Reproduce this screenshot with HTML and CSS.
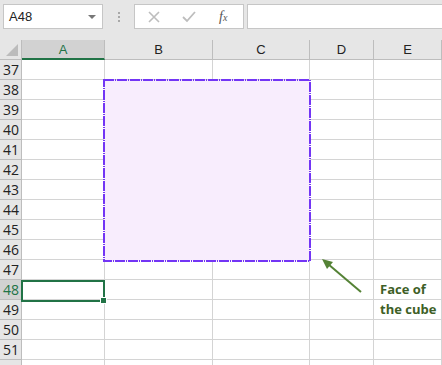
FILE: index.html
```html
<!DOCTYPE html>
<html>
<head>
<meta charset="utf-8">
<link rel="stylesheet" href="styles.css">
</head>
<body>
<div class="app">
  <div class="toolbar">
    <div class="namebox">
      <span class="name">A48</span>
      <span class="caret"></span>
    </div>
    <div class="dots"><i></i><i></i><i></i></div>
    <div class="fbtns">
      <svg class="ic" width="14" height="14" viewBox="0 0 14 14"><path d="M2 2 L12 12 M12 2 L2 12" stroke="#bdbdbd" stroke-width="1.6" fill="none"/></svg>
      <svg class="ic" width="16" height="14" viewBox="0 0 16 14"><path d="M2 7 L6 11 L14 2" stroke="#bdbdbd" stroke-width="1.8" fill="none"/></svg>
      <span class="fx">f<sub>x</sub></span>
    </div>
    <div class="finput"></div>
  </div>
  <div class="sheet">
    <div class="grid">
      <div class="corner"><span class="tri"></span></div>
      <div class="ch sel">A</div>
      <div class="ch">B</div>
      <div class="ch">C</div>
      <div class="ch">D</div>
      <div class="ch">E</div>

      <div class="rh">37</div><div class="c"></div><div class="c"></div><div class="c"></div><div class="c"></div><div class="c"></div>
      <div class="rh">38</div><div class="c"></div><div class="c"></div><div class="c"></div><div class="c"></div><div class="c"></div>
      <div class="rh">39</div><div class="c"></div><div class="c"></div><div class="c"></div><div class="c"></div><div class="c"></div>
      <div class="rh">40</div><div class="c"></div><div class="c"></div><div class="c"></div><div class="c"></div><div class="c"></div>
      <div class="rh">41</div><div class="c"></div><div class="c"></div><div class="c"></div><div class="c"></div><div class="c"></div>
      <div class="rh">42</div><div class="c"></div><div class="c"></div><div class="c"></div><div class="c"></div><div class="c"></div>
      <div class="rh">43</div><div class="c"></div><div class="c"></div><div class="c"></div><div class="c"></div><div class="c"></div>
      <div class="rh">44</div><div class="c"></div><div class="c"></div><div class="c"></div><div class="c"></div><div class="c"></div>
      <div class="rh">45</div><div class="c"></div><div class="c"></div><div class="c"></div><div class="c"></div><div class="c"></div>
      <div class="rh">46</div><div class="c"></div><div class="c"></div><div class="c"></div><div class="c"></div><div class="c"></div>
      <div class="rh">47</div><div class="c"></div><div class="c"></div><div class="c"></div><div class="c"></div><div class="c"></div>
      <div class="rh rsel">48</div><div class="c"></div><div class="c"></div><div class="c"></div><div class="c"></div><div class="c note">Face of</div>
      <div class="rh">49</div><div class="c"></div><div class="c"></div><div class="c"></div><div class="c"></div><div class="c note">the cube</div>
      <div class="rh">50</div><div class="c"></div><div class="c"></div><div class="c"></div><div class="c"></div><div class="c"></div>
      <div class="rh">51</div><div class="c"></div><div class="c"></div><div class="c"></div><div class="c"></div><div class="c"></div>
      <div class="rh"></div><div class="c"></div><div class="c"></div><div class="c"></div><div class="c"></div><div class="c"></div>
    </div>
    <div class="selbox"><span class="handle"></span></div>
    <svg class="overlay" width="442" height="325" viewBox="0 0 442 325">
      <rect x="104" y="40" width="206" height="181" fill="#f8edfd" stroke="#7335f5" stroke-width="2" stroke-dasharray="10 1 1 1"/>
      <line x1="361" y1="252" x2="328" y2="224" stroke="#548235" stroke-width="2"/>
      <polygon points="322,219 333,222 327,229" fill="#548235"/>
    </svg>
  </div>
</div>
</body>
</html>
```

FILE: styles.css
```css
html, body {
  margin: 0;
  padding: 0;
  background: #ffffff;
}
.app {
  width: 442px;
  height: 365px;
  overflow: hidden;
  font-family: "Open Sans", "Liberation Sans", sans-serif;
}
.toolbar {
  height: 40px;
  background: #e6e6e6;
  display: flex;
  align-items: flex-start;
  padding: 4px 0 0 3px;
  box-sizing: border-box;
}
.namebox {
  width: 100px;
  height: 25px;
  box-sizing: border-box;
  background: #fff;
  border: 1px solid #c6c6c6;
  display: flex;
  align-items: center;
  justify-content: space-between;
  padding: 0 6px 0 5px;
}
.name {
  font-family: "Liberation Sans", sans-serif;
  font-size: 13px;
  color: #222;
}
.caret {
  width: 0;
  height: 0;
  border-left: 4px solid transparent;
  border-right: 4px solid transparent;
  border-top: 4px solid #777;
}
.dots {
  width: 31px;
  height: 25px;
  display: flex;
  flex-direction: column;
  align-items: center;
  justify-content: center;
  gap: 2px;
}
.dots i {
  width: 2px;
  height: 2px;
  background: #a8a8a8;
  display: block;
}
.fbtns {
  width: 110px;
  height: 25px;
  box-sizing: border-box;
  background: #fff;
  border: 1px solid #c6c6c6;
  display: flex;
  align-items: center;
  padding-left: 12px;
  gap: 20px;
}
.fx {
  font-family: "Liberation Serif", serif;
  font-style: italic;
  font-size: 14px;
  color: #555;
  margin-left: 2px;
}
.fx sub {
  font-size: 10px;
  vertical-align: 0;
}
.finput {
  margin-left: 3px;
  flex: 1;
  height: 25px;
  box-sizing: border-box;
  background: #fff;
  border: 1px solid #c6c6c6;
  border-right: none;
}
.sheet {
  position: relative;
}
.grid {
  display: grid;
  grid-template-columns: 22px 83px 108px 97px 64px 68px;
  grid-auto-rows: 20px;
}
.corner {
  background: #e6e6e6;
  border-right: 1px solid #bdbdbd;
  border-bottom: 1px solid #bdbdbd;
  position: relative;
}
.tri {
  position: absolute;
  right: 3px;
  bottom: 3px;
  width: 0;
  height: 0;
  border-left: 12px solid transparent;
  border-bottom: 12px solid #bcbcbc;
}
.ch {
  background: #e6e6e6;
  border-right: 1px solid #bdbdbd;
  border-bottom: 1px solid #bdbdbd;
  display: flex;
  align-items: center;
  justify-content: center;
  font-family: "Liberation Sans", sans-serif;
  font-size: 13px;
  color: #222;
}
.ch.sel {
  background: #d2d2d2;
  border-bottom: 2px solid #217346;
  color: #217346;
}
.rh {
  background: #e6e6e6;
  border-right: 1px solid #bdbdbd;
  border-bottom: 1px solid #bdbdbd;
  display: flex;
  align-items: center;
  padding-left: 3px;
  font-size: 14px;
  color: #222;
}
.rh.rsel {
  background: #d2d2d2;
  color: #217346;
}
.c {
  border-right: 1px solid #d4d4d4;
  border-bottom: 1px solid #d4d4d4;
  min-width: 0;
}
.note {
  font-family: "Open Sans", sans-serif;
  font-weight: bold;
  font-size: 13px;
  color: #3e5f27;
  padding-left: 6px;
  line-height: 19px;
  white-space: nowrap;
}
.selbox {
  position: absolute;
  left: 21px;
  top: 240px;
  width: 84px;
  height: 22px;
  box-sizing: border-box;
  border: 2px solid #217346;
}
.handle {
  position: absolute;
  right: -4px;
  bottom: -4px;
  width: 5px;
  height: 5px;
  background: #217346;
  border: 1px solid #fff;
}
.overlay {
  position: absolute;
  left: 0;
  top: 0;
  pointer-events: none;
}
```
